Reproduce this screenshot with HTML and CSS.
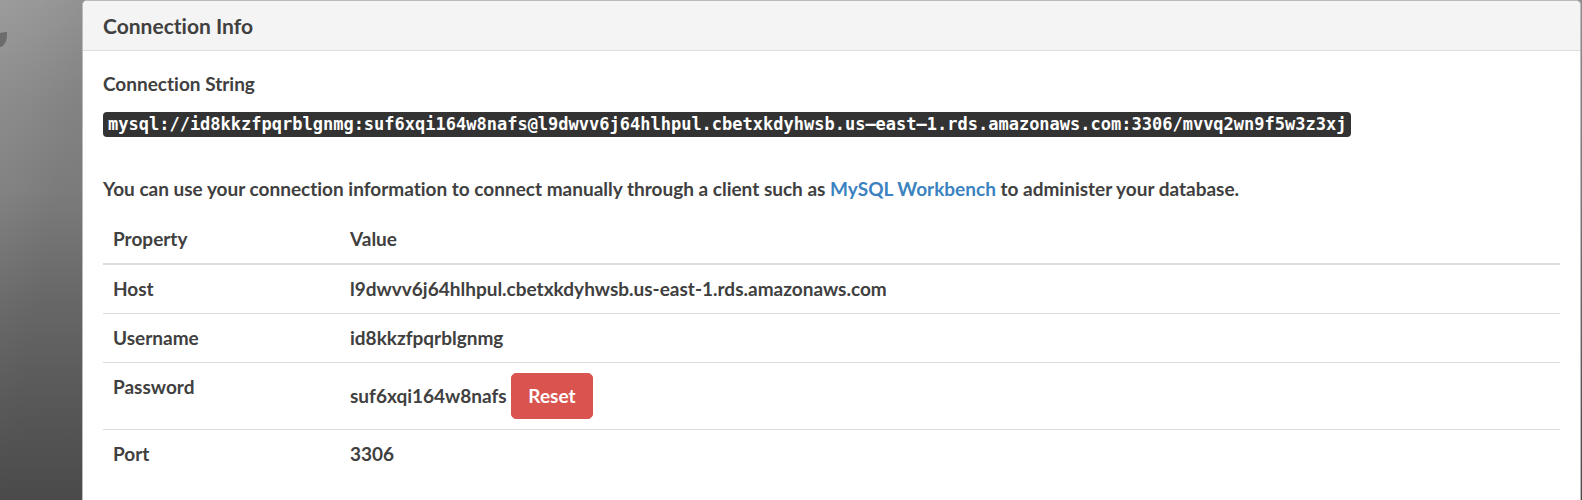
FILE: index.html
```
<!DOCTYPE html>
<html lang="en">
<head>
<meta charset="utf-8">
<title>Connection Info</title>
<link rel="stylesheet" href="styles.css">
</head>
<body>
<svg class="speck" width="8" height="16" viewBox="0 0 8 16" aria-hidden="true"><path d="M0 1Q4 0 7 0Q8 11 1 15L0 15Z" fill="#6c6c6c"/></svg>
<main class="panel">
  <h1 class="panel-heading">Connection Info</h1>
  <div class="panel-body">
    <h2 class="label">Connection String</h2>
    <p class="string"><code>mysql://id8kkzfpqrblgnmg:suf6xqi164w8nafs@l9dwvv6j64hlhpul.cbetxkdyhwsb.us–east–1.rds.amazonaws.com:3306/mvvq2wn9f5w3z3xj</code></p>
    <p class="hint">You can use your connection information to connect manually through a client such as <a href="#">MySQL Workbench</a> to administer your database.</p>
    <table class="props">
      <thead><tr><th class="name">Property</th><th>Value</th></tr></thead>
      <tbody>
        <tr><td>Host</td><td>l9dwvv6j64hlhpul.cbetxkdyhwsb.us-east-1.rds.amazonaws.com</td></tr>
        <tr><td>Username</td><td>id8kkzfpqrblgnmg</td></tr>
        <tr><td>Password</td><td>suf6xqi164w8nafs <button type="button" class="reset">Reset</button></td></tr>
        <tr><td>Port</td><td>3306</td></tr>
      </tbody>
    </table>
  </div>
</main>
</body>
</html>
```
FILE: styles.css
```
* { box-sizing: border-box; }
body {
  margin: 0;
  padding: 0 1px 0 82px;
  min-height: 100vh;
  display: flex;
  background:
    linear-gradient(100deg, #ffffff0a, #0000 40px, #0000000d 90px, #00000014),
    linear-gradient(#989898, #8a8a8a 20%, #828282 38%, #6b6b6b 62%, #5d5d5d 80%, #4e4e4e);
  color: #404040;
  font: bold 19px/28px Lato, sans-serif;
  font-variant-ligatures: none;
}
.speck { position: absolute; left: 0; top: 32px; }
.panel {
  flex: 1;
  background: #fff;
  border: 1px solid #bbb;
  border-bottom: 0;
  border-radius: 5px 5px 0 0;
}
.panel-heading {
  margin: 0;
  padding: 11px 20px 10px;
  background: #f4f4f4;
  border-bottom: 1px solid #ddd;
  border-radius: 4px 4px 0 0;
  font-size: 21px;
  line-height: 28px;
}
.panel-body { padding: 19px 20px; }
.label { margin: 0 0 14px; font-size: 19px; line-height: 28px; }
.string { margin: 0 0 38px; line-height: 25px; }
.string code {
  display: block;
  width: fit-content;
  padding: 0 5px;
  border-radius: 4px;
  background: #333;
  color: #fff;
  font: bold 17px/25px "DejaVu Sans Mono", monospace;
}
.hint { margin: 0 0 12px; }
.hint a { color: #3b83c0; text-decoration: none; }
.props { width: 100%; border-collapse: collapse; }
.props th, .props td { padding: 10px; text-align: left; vertical-align: top; }
.props th { border-bottom: 2px solid #ddd; }
.props .name { width: 237px; }
.props td { border-top: 1px solid #ddd; }
.reset {
  padding: 8px 16px;
  border: 1px solid #d9534f;
  border-radius: 5px;
  background: #d9534f;
  color: #fff;
  font: inherit;
}
```
